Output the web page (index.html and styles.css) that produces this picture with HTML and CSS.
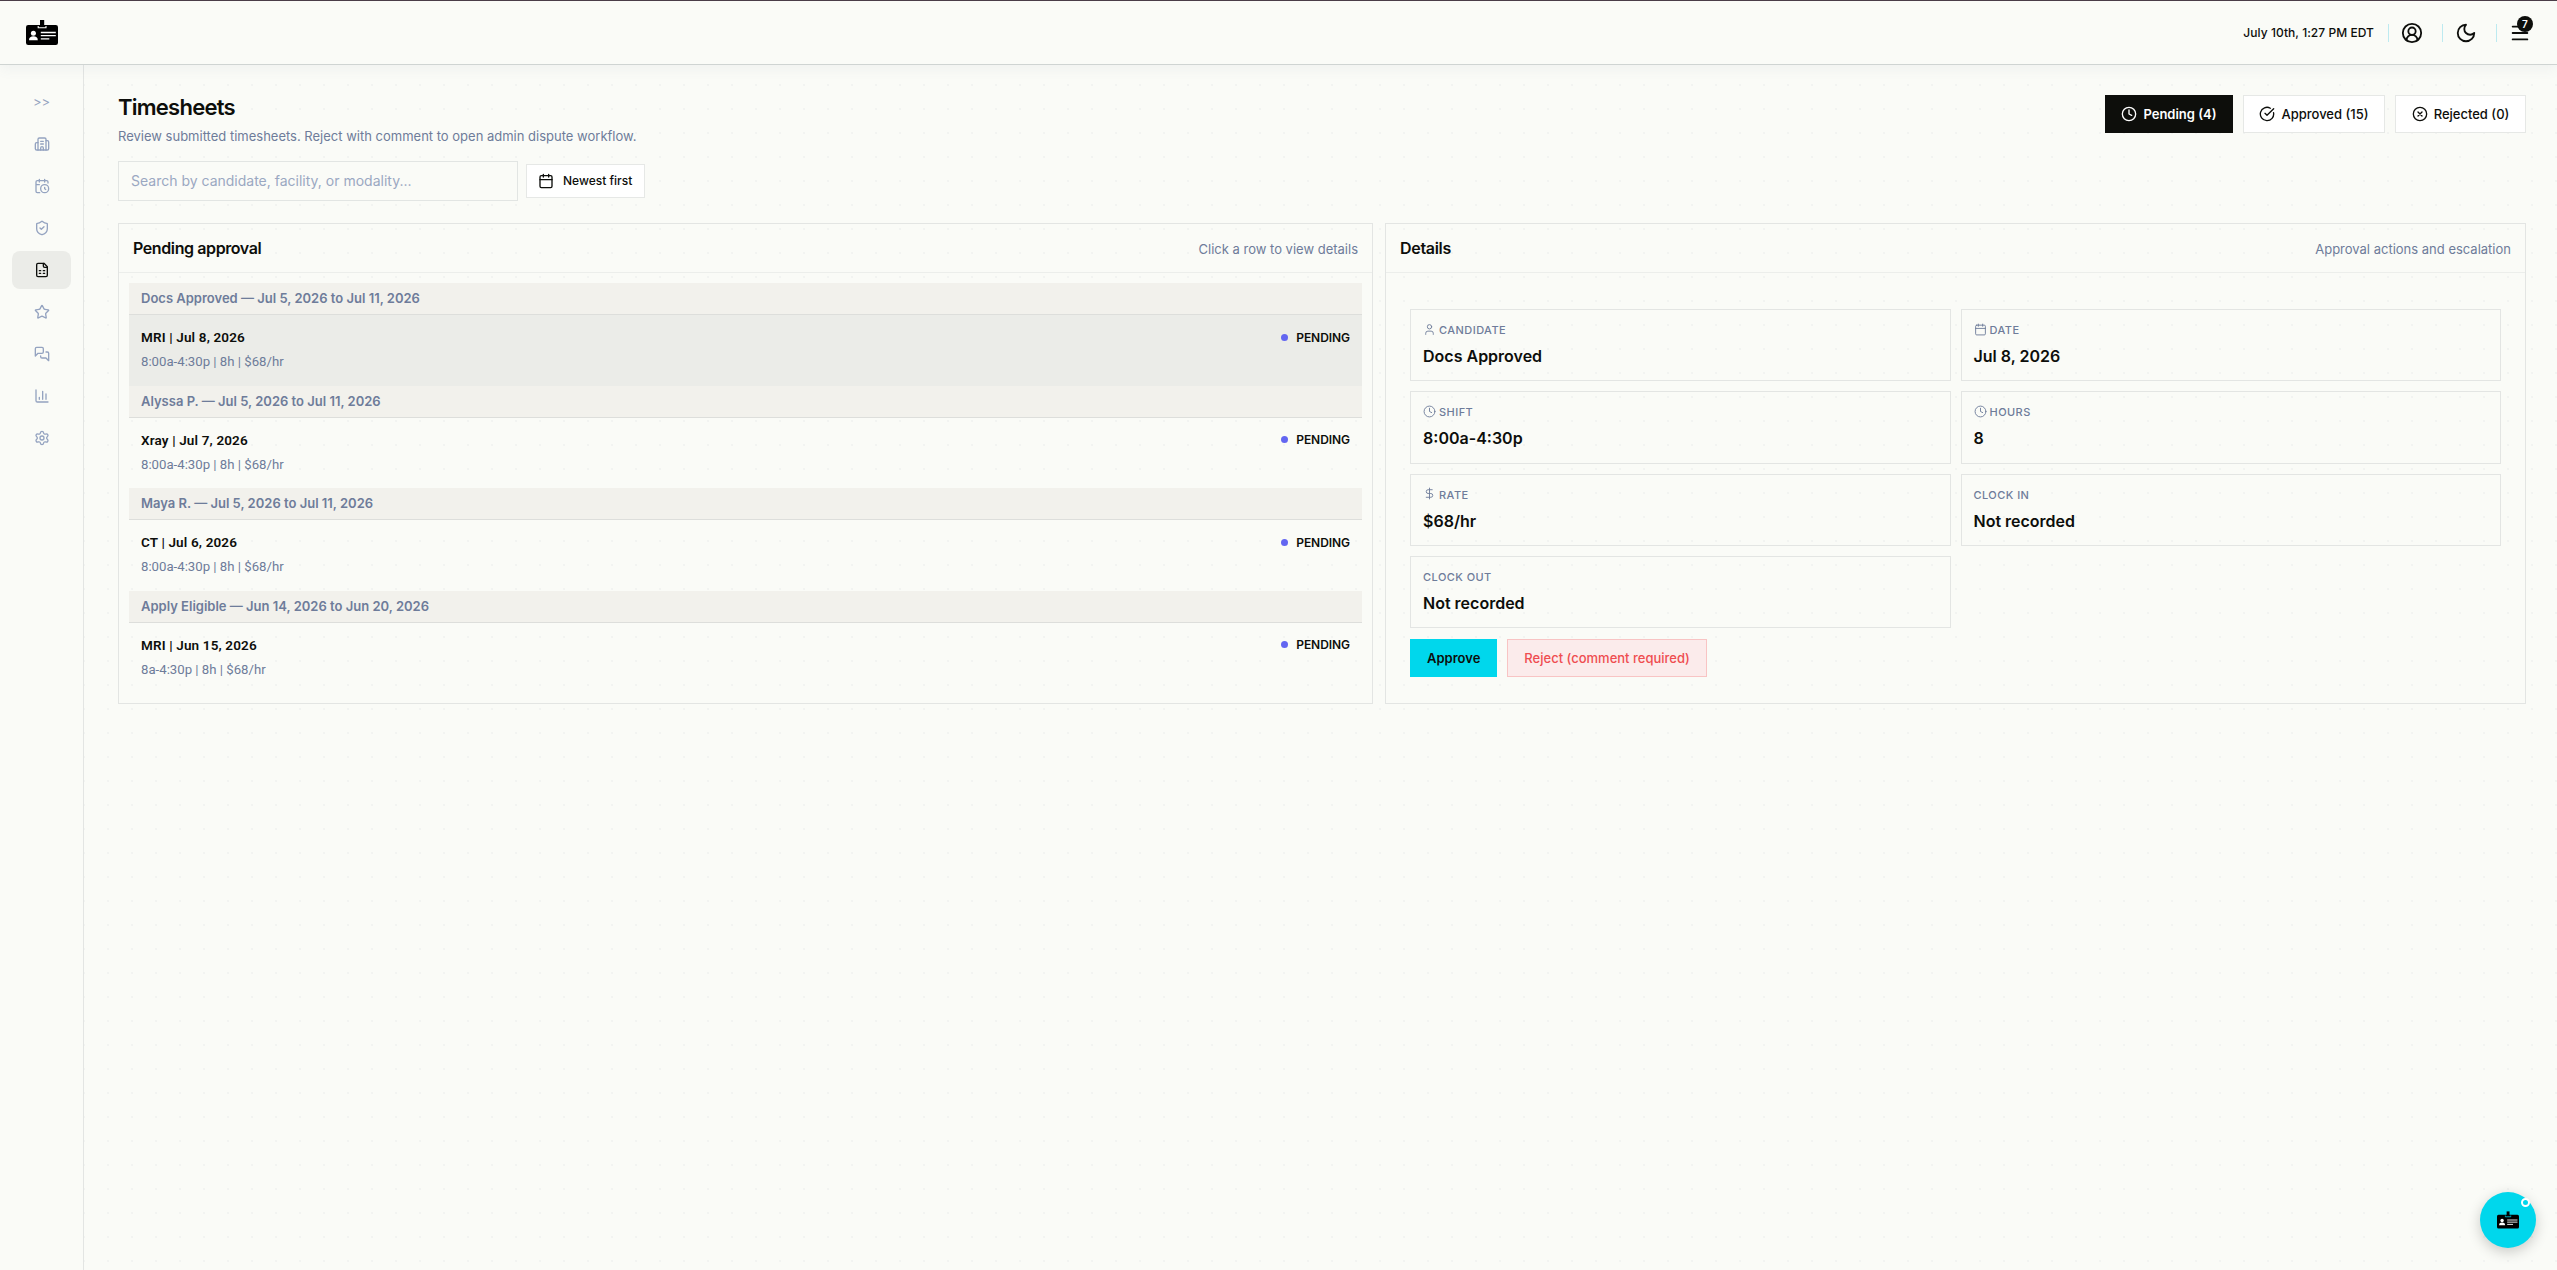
FILE: index.html
```html
<!DOCTYPE html>
<html lang="en">
<head>
<meta charset="utf-8">
<title>Timesheets</title>
<link rel="stylesheet" href="styles.css">
</head>
<body>
<svg class="sprite" aria-hidden="true">
  <symbol id="badge" viewBox="0 0 32 25">
    <rect x="0" y="5" width="32" height="20" rx="2.200" fill="#000"/>
    <path d="M14 0h4.200v6h-4.200z" fill="#000"/>
    <path d="M12.200 6v1.800h7.800V6" fill="none" stroke="currentColor" stroke-width="1.100"/>
    <circle cx="7.400" cy="13.200" r="2.500" fill="#fff"/>
    <path d="M3 20.200c0-3 1.800-4 4.400-4s4.400 1 4.400 4z" fill="#fff"/>
    <path d="M14.800 12.500h15M14.800 15.600h15M14.800 18.900h8.500" stroke="#fff" stroke-width="1.300" fill="none"/>
  </symbol>
  <symbol id="clock" viewBox="0 0 24 24"><circle cx="12" cy="12" r="10"/><path d="M12 6v6l4 2"/></symbol>
  <symbol id="calendar" viewBox="0 0 24 24"><path d="M8 2v4M16 2v4M3 10h18"/><rect x="3" y="4" width="18" height="18" rx="2"/></symbol>
  <symbol id="user" viewBox="0 0 24 24"><circle cx="12" cy="7" r="4"/><path d="M19 21v-2a4 4 0 0 0-4-4H9a4 4 0 0 0-4 4v2"/></symbol>
  <symbol id="dollar" viewBox="0 0 24 24"><path d="M12 2v20M17 5H9.500a3.500 3.500 0 0 0 0 7h5a3.500 3.500 0 0 1 0 7H6"/></symbol>
</svg>

<header class="topbar">
  <svg class="logo"><use href="#badge"/></svg>
  <div class="topbar-right">
    <span class="now">July 10th, 1:27 PM EDT</span>
    <span class="sep"></span>
    <svg class="icon i22 user-btn" viewBox="0 0 24 24"><path d="M18 20a6 6 0 0 0-12 0"/><circle cx="12" cy="10" r="4"/><circle cx="12" cy="12" r="10"/></svg>
    <span class="sep"></span>
    <svg class="icon i22 moon-btn" viewBox="0 0 24 24"><path d="M12 3a6 6 0 0 0 9 9 9 9 0 1 1-9-9Z"/></svg>
    <span class="sep"></span>
    <span class="menu-btn">
      <svg class="icon i22" viewBox="0 0 24 24"><path d="M4 5h16M4 12h16M4 19h16"/></svg>
      <span class="count">7</span>
    </span>
  </div>
</header>

<div class="shell">
  <nav class="sidebar">
    <a class="nav expand">&gt;&gt;</a>
    <a class="nav"><svg class="icon i16" viewBox="0 0 24 24"><path d="M10 12h4M10 8h4M14 21v-3a2 2 0 0 0-4 0v3"/><path d="M6 10H4a2 2 0 0 0-2 2v7a2 2 0 0 0 2 2h16a2 2 0 0 0 2-2V9a2 2 0 0 0-2-2h-2"/><path d="M6 21V5a2 2 0 0 1 2-2h8a2 2 0 0 1 2 2v16"/></svg></a>
    <a class="nav"><svg class="icon i16" viewBox="0 0 24 24"><path d="M16 14v2.200l1.600 1M16 2v4M21 7.500V6a2 2 0 0 0-2-2H5a2 2 0 0 0-2 2v14a2 2 0 0 0 2 2h3.500M3 10h5M8 2v4"/><circle cx="16" cy="16" r="6"/></svg></a>
    <a class="nav"><svg class="icon i16" viewBox="0 0 24 24"><path d="M20 13c0 5-3.500 7.500-7.660 8.950a1 1 0 0 1-.67-.01C7.500 20.500 4 18 4 13V6a1 1 0 0 1 1-1c2 0 4.500-1.200 6.240-2.720a1.170 1.170 0 0 1 1.520 0C14.510 3.810 17 5 19 5a1 1 0 0 1 1 1z"/><path d="m9 12 2 2 4-4"/></svg></a>
    <a class="nav active"><svg class="icon i16" viewBox="0 0 24 24"><path d="M15 2H6a2 2 0 0 0-2 2v16a2 2 0 0 0 2 2h12a2 2 0 0 0 2-2V7Z"/><path d="M14 2v4a2 2 0 0 0 2 2h4M8 13h2M14 13h2M8 17h2M14 17h2"/></svg></a>
    <a class="nav"><svg class="icon i16" viewBox="0 0 24 24"><path d="M11.525 2.295a.53.53 0 0 1 .95 0l2.310 4.679a2.123 2.123 0 0 0 1.595 1.160l5.166.756a.53.53 0 0 1 .294.904l-3.736 3.638a2.123 2.123 0 0 0-.611 1.878l.882 5.140a.53.53 0 0 1-.771.560l-4.618-2.428a2.122 2.122 0 0 0-1.973 0L6.396 21.010a.53.53 0 0 1-.770-.560l.881-5.139a2.122 2.122 0 0 0-.611-1.879L2.160 9.795a.53.53 0 0 1 .294-.906l5.165-.755a2.122 2.122 0 0 0 1.597-1.160z"/></svg></a>
    <a class="nav"><svg class="icon i16" viewBox="0 0 24 24"><path d="M14 9a2 2 0 0 1-2 2H6l-4 4V4a2 2 0 0 1 2-2h8a2 2 0 0 1 2 2zM18 9h2a2 2 0 0 1 2 2v11l-4-4h-6a2 2 0 0 1-2-2v-1"/></svg></a>
    <a class="nav"><svg class="icon i16" viewBox="0 0 24 24"><path d="M3 3v16a2 2 0 0 0 2 2h16M13 17V5M18 17V9M8 17v-3"/></svg></a>
    <a class="nav"><svg class="icon i16" viewBox="0 0 24 24"><path d="M9.671 4.136a2.340 2.340 0 0 1 4.659 0 2.340 2.340 0 0 0 3.319 1.915 2.340 2.340 0 0 1 2.330 4.033 2.340 2.340 0 0 0 0 3.831 2.340 2.340 0 0 1-2.330 4.033 2.340 2.340 0 0 0-3.319 1.915 2.340 2.340 0 0 1-4.659 0 2.340 2.340 0 0 0-3.320-1.915 2.340 2.340 0 0 1-2.330-4.033 2.340 2.340 0 0 0 0-3.831A2.340 2.340 0 0 1 6.350 6.051a2.340 2.340 0 0 0 3.319-1.915"/><circle cx="12" cy="12" r="3"/></svg></a>
  </nav>

  <main class="main">
    <div class="page-head">
      <div>
        <h1>Timesheets</h1>
        <p class="lede">Review submitted timesheets. Reject with comment to open admin dispute workflow.</p>
      </div>
      <div class="tabs">
        <button class="tab on"><svg class="icon i16"><use href="#clock"/></svg>Pending (4)</button>
        <button class="tab"><svg class="icon i16" viewBox="0 0 24 24"><path d="M21.801 10A10 10 0 1 1 17 3.335"/><path d="m9 11 3 3L22 4"/></svg>Approved (15)</button>
        <button class="tab"><svg class="icon i16" viewBox="0 0 24 24"><circle cx="12" cy="12" r="10"/><path d="m15 9-6 6M9 9l6 6"/></svg>Rejected (0)</button>
      </div>
    </div>

    <div class="filters">
      <input class="search" type="text" placeholder="Search by candidate, facility, or modality...">
      <button class="sort"><svg class="icon i16"><use href="#calendar"/></svg>Newest first</button>
    </div>

    <div class="panels">
      <section class="panel">
        <div class="panel-head"><h2>Pending approval</h2><span>Click a row to view details</span></div>
        <div class="list">
          <div class="group">Docs Approved — Jul 5, 2026 to Jul 11, 2026</div>
          <div class="row selected"><div><b>MRI | Jul 8, 2026</b><small>8:00a-4:30p | 8h | $68/hr</small></div><span class="status">PENDING</span></div>
          <div class="group">Alyssa P. — Jul 5, 2026 to Jul 11, 2026</div>
          <div class="row"><div><b>Xray | Jul 7, 2026</b><small>8:00a-4:30p | 8h | $68/hr</small></div><span class="status">PENDING</span></div>
          <div class="group">Maya R. — Jul 5, 2026 to Jul 11, 2026</div>
          <div class="row"><div><b>CT | Jul 6, 2026</b><small>8:00a-4:30p | 8h | $68/hr</small></div><span class="status">PENDING</span></div>
          <div class="group">Apply Eligible — Jun 14, 2026 to Jun 20, 2026</div>
          <div class="row"><div><b>MRI | Jun 15, 2026</b><small>8a-4:30p | 8h | $68/hr</small></div><span class="status">PENDING</span></div>
        </div>
      </section>

      <section class="panel">
        <div class="panel-head"><h2 class="loose">Details</h2><span>Approval actions and escalation</span></div>
        <div class="details">
          <div class="facts">
            <div class="fact"><label><svg class="icon i13"><use href="#user"/></svg>CANDIDATE</label><strong>Docs Approved</strong></div>
            <div class="fact"><label><svg class="icon i13"><use href="#calendar"/></svg>DATE</label><strong>Jul 8, 2026</strong></div>
            <div class="fact"><label><svg class="icon i13"><use href="#clock"/></svg>SHIFT</label><strong>8:00a-4:30p</strong></div>
            <div class="fact"><label><svg class="icon i13"><use href="#clock"/></svg>HOURS</label><strong>8</strong></div>
            <div class="fact"><label><svg class="icon i13"><use href="#dollar"/></svg>RATE</label><strong>$68/hr</strong></div>
            <div class="fact"><label>CLOCK IN</label><strong>Not recorded</strong></div>
            <div class="fact"><label>CLOCK OUT</label><strong>Not recorded</strong></div>
          </div>
          <div class="actions">
            <button class="approve">Approve</button>
            <button class="reject">Reject (comment required)</button>
          </div>
        </div>
      </section>
    </div>
  </main>
</div>

<button class="fab"><svg class="fab-icon"><use href="#badge"/></svg><span class="ring"></span></button>
</body>
</html>
```
FILE: styles.css
```css
* { box-sizing: border-box; }
body {
  margin: 0;
  height: 1270px;
  overflow: hidden;
  display: flex;
  flex-direction: column;
  font-family: Inter, "Liberation Sans", sans-serif;
  font-size: 13px;
  color: #0d0e0b;
  background: #fafbf7;
}
h1, h2, p { margin: 0; }
button { font: inherit; color: inherit; margin: 0; }
.sprite { position: absolute; width: 0; height: 0; }
.icon { fill: none; stroke: currentColor; stroke-width: 2; stroke-linecap: round; stroke-linejoin: round; flex: none; display: block; }
.i13 { width: 13px; height: 13px; stroke-width: 1.7; }
.i16 { width: 16px; height: 16px; }
.i22 { width: 22px; height: 22px; }

.topbar {
  position: relative;
  flex: none;
  height: 65px;
  display: flex;
  align-items: center;
  justify-content: space-between;
  padding: 0 26px;
  border-top: 1px solid #4a3d48;
  border-bottom: 1px solid #cfd4d2;
  background: #fafbf7;
  box-shadow: 0 4px 12px rgba(100, 116, 139, .07);
}
.logo { width: 32px; height: 25px; color: #fafbf7; }
.topbar-right { display: flex; align-items: center; }
.now { font-size: 12px; font-weight: 450; letter-spacing: .05px; margin-right: 14px; }
.sep { width: 1px; height: 18px; background: #bdeaf0; }
.user-btn { margin: 0 19px 0 12px; }
.moon-btn { margin: 0 19px 0 12px; }
.menu-btn { position: relative; margin-left: 12px; }
.count {
  position: absolute;
  left: 8px;
  top: -6px;
  width: 16px;
  height: 16px;
  border-radius: 50%;
  background: #0d0e0b;
  color: #fff;
  font-size: 10px;
  font-weight: 600;
  line-height: 16px;
  text-align: center;
}

.shell { flex: 1; display: flex; min-height: 0; }
.sidebar {
  width: 84px;
  flex: none;
  border-right: 1px solid #e3e5e3;
  padding: 18px 12px;
  display: flex;
  flex-direction: column;
  gap: 4px;
}
.nav { height: 38px; display: flex; align-items: center; justify-content: center; border-radius: 8px; color: #94a3c0; }
.nav.active { background: #ebece8; color: #0d0e0b; }
.expand { font-size: 13px; }

.main {
  flex: 1;
  padding: 30px 31px 0 34px;
  background-image: radial-gradient(circle, rgba(100, 116, 139, .05) 1px, transparent 1px);
  background-size: 24px 24px;
  background-position: 12px 8px;
}
.page-head { display: flex; justify-content: space-between; height: 66px; }
h1 { margin-top: -1px; font-size: 22px; font-weight: 600; line-height: 26px; letter-spacing: -.75px; }
.lede { margin-top: 7px; line-height: 18px; color: #6e7c9a; }
.tabs { display: flex; gap: 10px; }
.tab {
  width: 128px;
  height: 38px;
  display: flex;
  align-items: center;
  justify-content: center;
  gap: 6px;
  padding: 0;
  border: 1px solid #e6e8e6;
  background: #fff;
  font-weight: 450;
}
.tab:nth-child(2) { width: 142px; }
.tab:nth-child(3) { width: 131px; }
.tab.on { background: #0d0e0b; border-color: #0d0e0b; color: #fff; font-weight: 600; }

.filters { display: flex; align-items: center; gap: 8px; height: 40px; }
.search {
  width: 400px;
  height: 40px;
  padding: 0 12px 2px;
  border: 1px solid #e2e5e3;
  background: #fafbf7;
  font: 14px Inter, "Liberation Sans", sans-serif;
}
.search::placeholder { color: #9aa8c2; opacity: 1; }
.sort {
  width: 119px;
  height: 34px;
  display: flex;
  align-items: center;
  gap: 9px;
  padding: 0 0 1px 11px;
  border: 1px solid #e6e8e6;
  background: #fff;
  font-size: 12px;
  font-weight: 450;
}

.panels { margin-top: 22px; display: grid; grid-template-columns: 1.1fr 1fr; gap: 12px; height: 480.5px; }
.panel { border: 1px solid #e3e5e3; }
.panel-head {
  height: 49px;
  padding: 0 14px;
  display: flex;
  align-items: center;
  justify-content: space-between;
  border-bottom: 1px solid #eceeeb;
  color: #6e7c9a;
}
.panel-head span { margin-top: 2px; }
h2 { font-size: 16px; font-weight: 600; letter-spacing: -.4px; color: #0d0e0b; }
h2.loose { letter-spacing: -.32px; }
.list { padding: 10px; }
.group {
  height: 32px;
  padding: 0 12px;
  line-height: 31px;
  border-bottom: 1px solid #dddedb;
  background: #f2f1ec;
  color: #6e7c9a;
  font-weight: 600;
}
.row { height: 70.6px; padding: 13px 12px; display: flex; justify-content: space-between; }
.row.selected { background: #ebece8; }
.row b, .row small { display: block; font-family: Roboto, sans-serif; }
.row b { font-size: 13.5px; font-weight: 600; line-height: 18px; letter-spacing: .15px; }
.row small { font-size: 13.2px; line-height: 18px; margin-top: 7px; color: #6e7c9a; }
.status { display: flex; align-items: center; height: 18px; gap: 8px; font-size: 12px; font-weight: 600; letter-spacing: -.05px; }
.status::before { content: ""; width: 7px; height: 7px; border-radius: 50%; background: #6366f1; }

.details { padding: 36px 24px 0; }
.facts { display: grid; grid-template-columns: 1fr 1fr; gap: 10px; }
.fact { height: 72.33px; padding: 12px; border: 1px solid #e3e5e3; }
.fact label { display: flex; align-items: center; gap: 3px; height: 16px; font-size: 11px; font-weight: 500; letter-spacing: .44px; color: #6e7c9a; }
.fact label .icon { margin-top: -2px; }
.fact strong { display: block; margin-top: 7px; font-size: 16px; font-weight: 600; line-height: 22px; }
.actions { margin-top: 10.7px; display: flex; gap: 10px; }
.actions button { height: 38px; padding: 0 16px; border: 1px solid; }
.actions .approve { background: #00d7ec; border-color: #00d7ec; font-weight: 600; }
.actions .reject { background: #fbebeb; border-color: #f8c4c4; color: #ef4d50; font-weight: 500; }

.fab {
  position: absolute;
  left: 2480px;
  top: 1192px;
  width: 56px;
  height: 56px;
  padding: 0;
  border: 0;
  border-radius: 50%;
  background: #00d7ec;
  display: flex;
  align-items: center;
  justify-content: center;
  box-shadow: 0 4px 14px rgba(0, 0, 0, .2);
}
.fab-icon { width: 22px; height: 18px; color: #00d7ec; }
.ring { position: absolute; left: 41px; top: 6px; width: 9px; height: 9px; border: 2px solid #fff; border-radius: 50%; }
```
